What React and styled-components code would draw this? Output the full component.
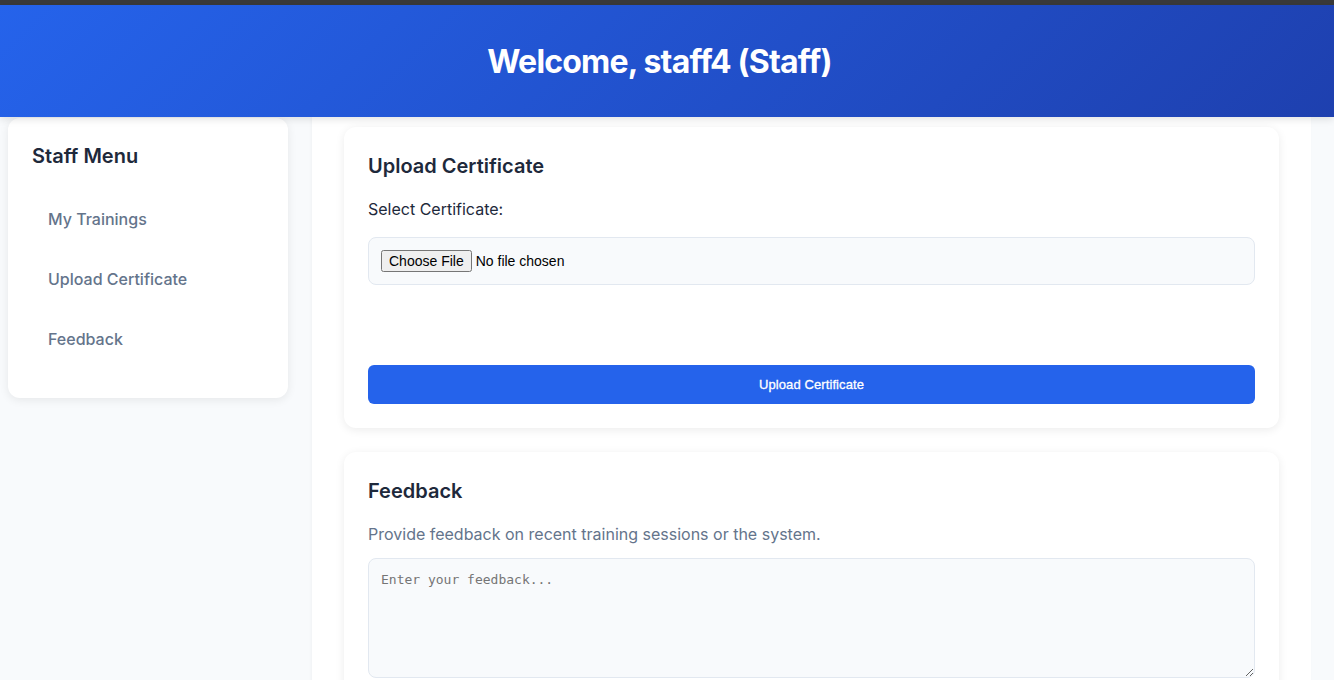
import React from "react";
import styled, { createGlobalStyle } from "styled-components";

const GlobalStyle = createGlobalStyle`
  * {
    box-sizing: border-box;
  }
  body {
    margin: 0;
    background: #f8fafc;
    font-family: Inter, "Noto Sans", sans-serif;
    color: #1e293b;
  }
`;

const TopStrip = styled("div")`
  height: 5px;
  background: #3a3a3a;
`;

const Header = styled("header")`
  height: 112px;
  display: flex;
  align-items: center;
  justify-content: center;
  padding-right: 15px;
  background: linear-gradient(135deg, #2563eb 0%, #1e40af 100%);
  box-shadow: 0 2px 8px rgba(0, 0, 0, 0.12);
  position: relative;
  z-index: 2;
`;

const Title = styled("h1")`
  margin: 0;
  color: #ffffff;
  font-size: 32px;
  font-weight: 700;
  letter-spacing: -0.8px;
`;

const Layout = styled("div")`
  display: flex;
  align-items: flex-start;
  gap: 24px;
  padding-left: 8px;
`;

const Sidebar = styled("aside")`
  width: 280px;
  flex-shrink: 0;
  background: #ffffff;
  border-radius: 12px;
  box-shadow: 0 2px 10px rgba(0, 0, 0, 0.08);
  padding: 23px 24px 29px;
  margin-top: 1px;
`;

const SidebarTitle = styled("h2")`
  margin: 0 0 18px;
  font-size: 20px;
  font-weight: 600;
  line-height: 30px;
  color: #1e293b;
`;

const MenuItem = styled("div")`
  padding: 0 16px;
  height: 60px;
  display: flex;
  align-items: center;
  font-size: 16px;
  font-weight: 500;
  color: #64748b;
  cursor: pointer;
`;

const Main = styled("main")`
  width: 999px;
  min-height: 563px;
  background: #ffffff;
  padding: 10px 32px 0;
  display: flex;
  flex-direction: column;
  gap: 24px;
  box-shadow: -1px 0 3px rgba(0, 0, 0, 0.03);
`;

const Card = styled("section")`
  background: #ffffff;
  border-radius: 12px;
  box-shadow: 0 2px 10px rgba(0, 0, 0, 0.08);
  padding: 24px;
`;

const CardTitle = styled("h3")`
  margin: 0 0 16px;
  font-size: 20px;
  font-weight: 600;
  line-height: 30px;
  color: #1e293b;
`;

const Label = styled("label")`
  display: block;
  font-size: 16px;
  line-height: 24px;
  color: #1e293b;
  margin-bottom: 16px;
`;

const Hint = styled("p")`
  margin: 0 0 12px;
  font-size: 16px;
  line-height: 24px;
  color: #64748b;
`;

const FileBox = styled("div")`
  height: 48px;
  display: flex;
  align-items: center;
  padding: 0 12px;
  background: #f8fafc;
  border: 1px solid #e2e8f0;
  border-radius: 8px;
  margin-bottom: 80px;

  input {
    font-family: "Liberation Sans", Arial, sans-serif;
    font-size: 14px;
    color: #000;
  }
`;

const Button = styled("button")`
  width: 100%;
  height: 39px;
  border: none;
  border-radius: 6px;
  background: #2563eb;
  color: #ffffff;
  font-family: "Liberation Sans", Arial, sans-serif;
  font-size: 13px;
  font-weight: 500;
  letter-spacing: 0.1px;
  -webkit-text-stroke: 0.3px #ffffff;
  cursor: pointer;
`;

const TextArea = styled("textarea")`
  display: block;
  width: 100%;
  height: 120px;
  padding: 13px 12px 12px;
  background: #f8fafc;
  border: 1px solid #e2e8f0;
  border-radius: 8px;
  font-family: "DejaVu Sans Mono", monospace;
  font-size: 13px;
  &::placeholder {
    color: #757575;
  }
`;

const App = () => {
  const menu = ["My Trainings", "Upload Certificate", "Feedback"];

  return (
    <>
      <GlobalStyle />
      <TopStrip />
      <Header>
        <Title>Welcome, staff4 (Staff)</Title>
      </Header>
      <Layout>
        <Sidebar>
          <SidebarTitle>Staff Menu</SidebarTitle>
          {menu.map((item) => (
            <MenuItem key={item}>{item}</MenuItem>
          ))}
        </Sidebar>
        <Main>
          <Card>
            <CardTitle>Upload Certificate</CardTitle>
            <Label htmlFor="cert">Select Certificate:</Label>
            <FileBox>
              <input id="cert" type="file" />
            </FileBox>
            <Button>Upload Certificate</Button>
          </Card>
          <Card>
            <CardTitle>Feedback</CardTitle>
            <Hint>Provide feedback on recent training sessions or the system.</Hint>
            <TextArea placeholder="Enter your feedback..." />
          </Card>
        </Main>
      </Layout>
    </>
  );
};

export default App;
